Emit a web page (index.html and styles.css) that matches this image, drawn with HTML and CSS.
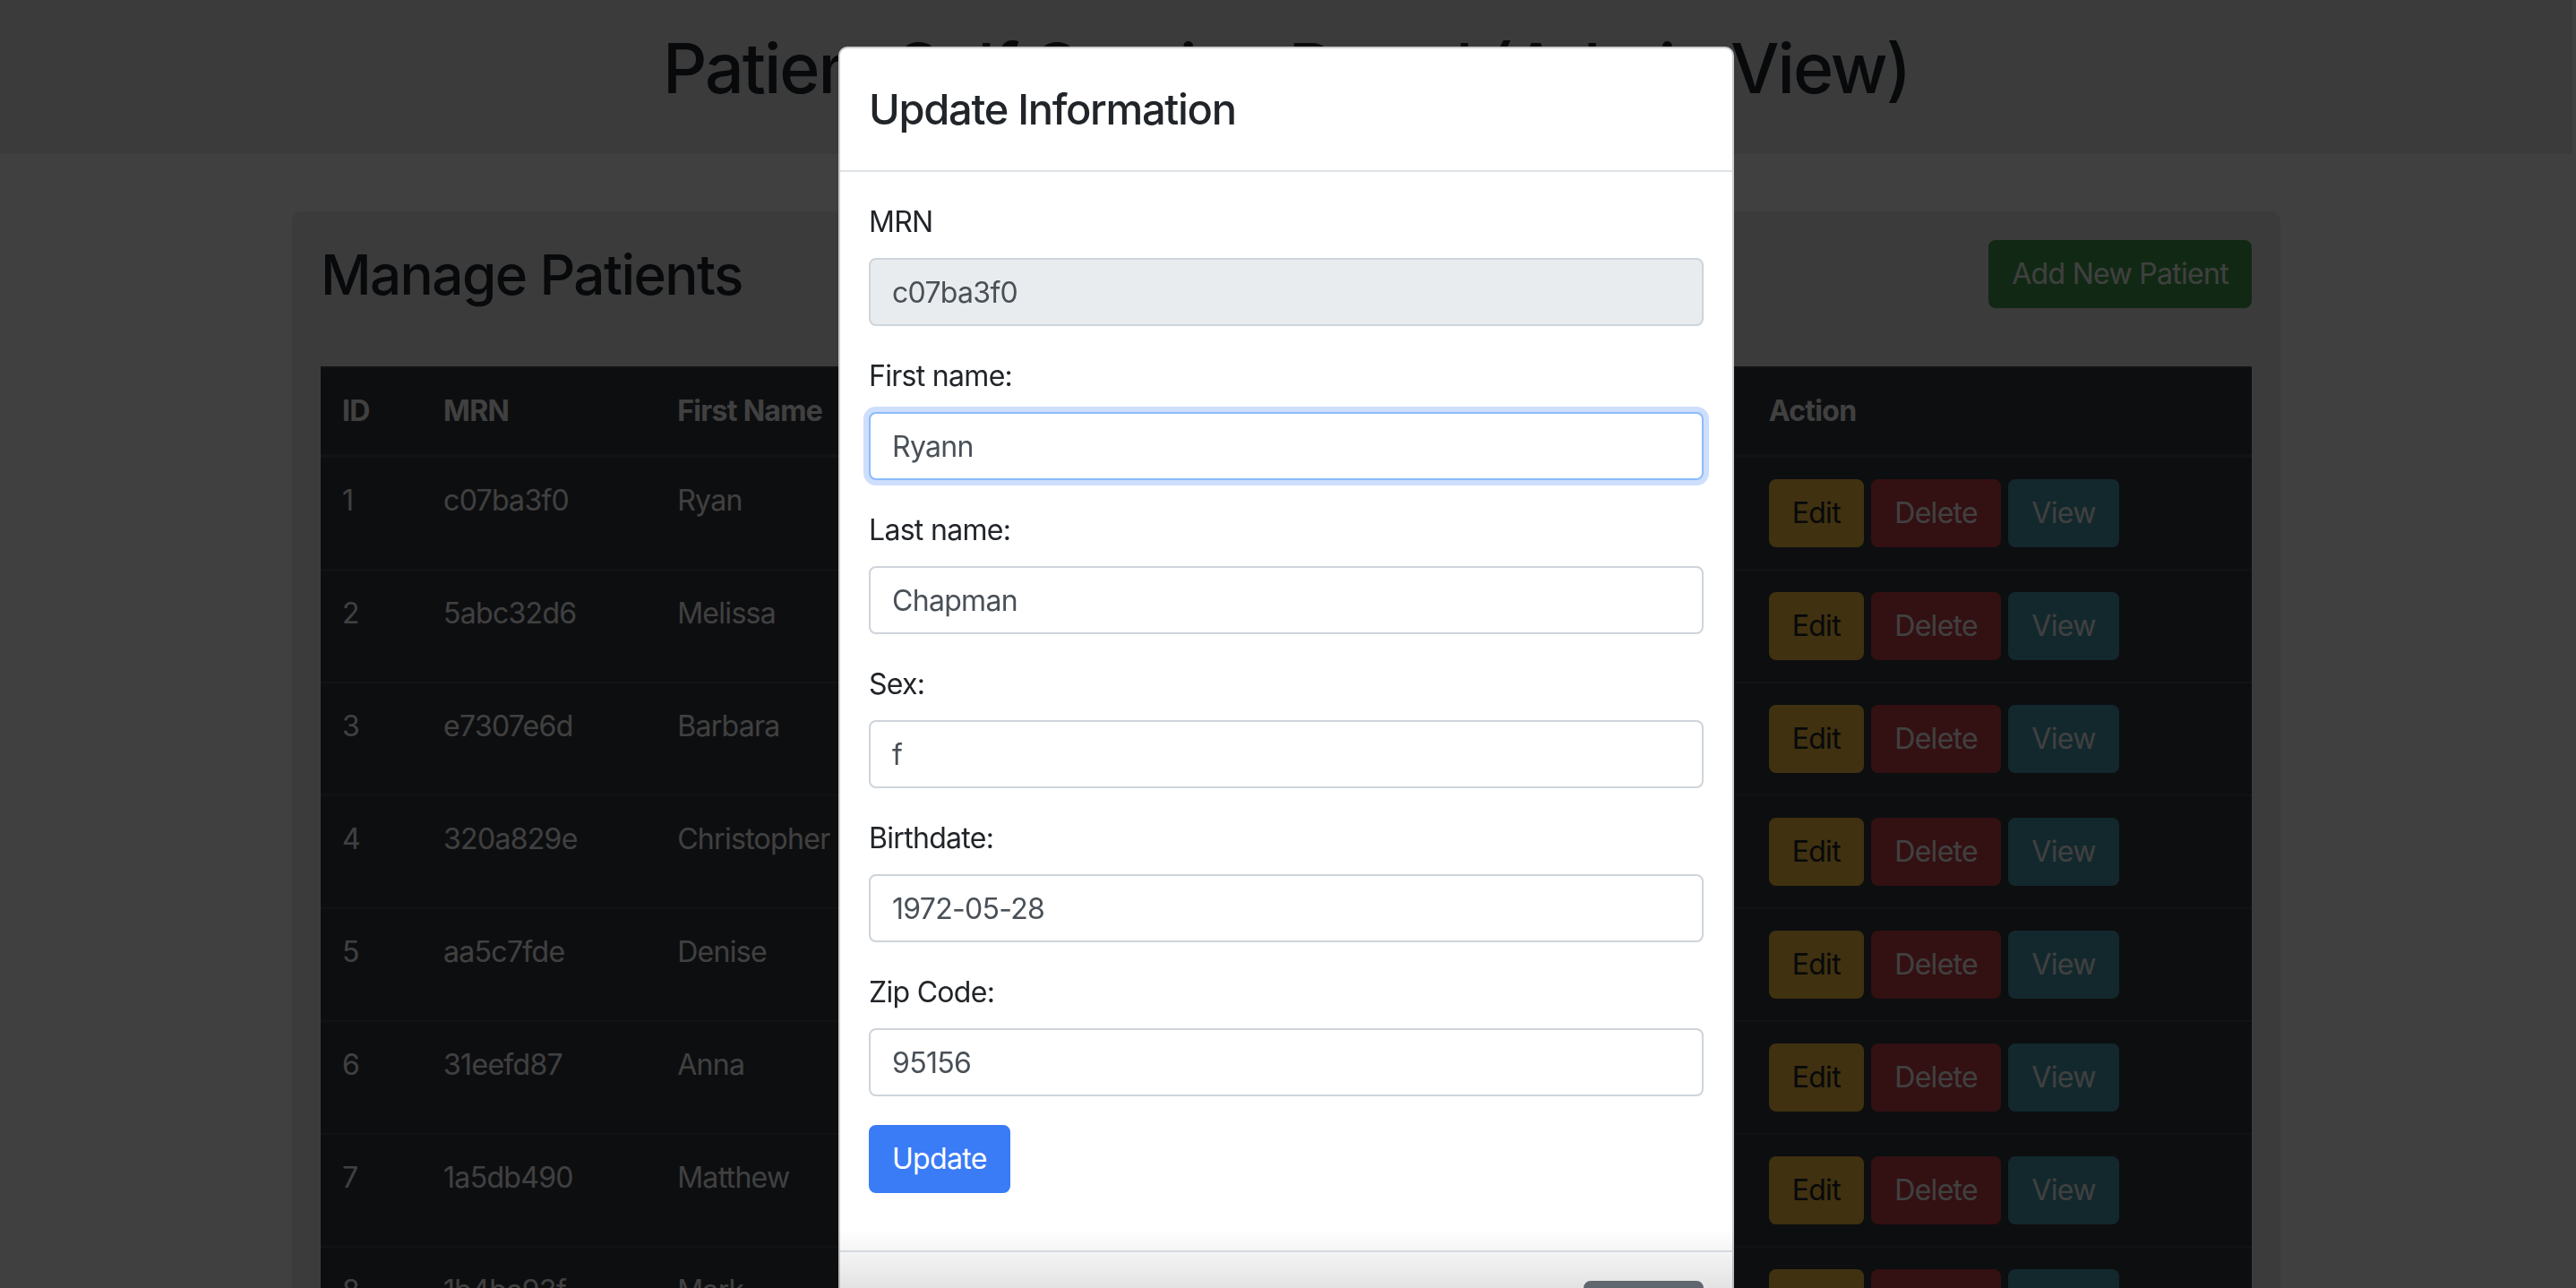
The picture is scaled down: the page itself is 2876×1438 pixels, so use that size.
FILE: index.html
```html
<!DOCTYPE html>
<html lang="en">
<head>
<meta charset="utf-8">
<title>Patient Self Service Portal (Admin View)</title>
<link rel="stylesheet" href="styles.css">
</head>
<body>
<header class="page-header">
  <h1 class="page-title">Patient Self Service Portal (Admin View)</h1>
</header>
<main class="container">
  <section class="panel">
    <div class="panel-head">
      <h2 class="panel-title">Manage Patients</h2>
      <button class="btn btn-success">Add New Patient</button>
    </div>
    <table class="table">
      <colgroup>
        <col class="c-id"><col class="c-mrn"><col class="c-first"><col class="c-last"><col class="c-sex"><col class="c-birth"><col class="c-zip"><col class="c-action">
      </colgroup>
      <thead>
        <tr><th>ID</th><th>MRN</th><th>First Name</th><th>Last Name</th><th>Sex</th><th>Birthdate</th><th>Zip Code</th><th>Action</th></tr>
      </thead>
      <tbody>
        <tr><td>1</td><td>c07ba3f0</td><td>Ryan</td><td>Chapman</td><td>f</td><td>1972-05-28</td><td>95156</td><td><button class="btn btn-warning">Edit</button> <button class="btn btn-danger">Delete</button> <button class="btn btn-info">View</button></td></tr>
        <tr><td>2</td><td>5abc32d6</td><td>Melissa</td><td>Moore</td><td>f</td><td>1985-11-02</td><td>94110</td><td><button class="btn btn-warning">Edit</button> <button class="btn btn-danger">Delete</button> <button class="btn btn-info">View</button></td></tr>
        <tr><td>3</td><td>e7307e6d</td><td>Barbara</td><td>Reed</td><td>f</td><td>1960-03-14</td><td>95014</td><td><button class="btn btn-warning">Edit</button> <button class="btn btn-danger">Delete</button> <button class="btn btn-info">View</button></td></tr>
        <tr><td>4</td><td>320a829e</td><td>Christopher</td><td>Lopez</td><td>m</td><td>1991-07-21</td><td>94301</td><td><button class="btn btn-warning">Edit</button> <button class="btn btn-danger">Delete</button> <button class="btn btn-info">View</button></td></tr>
        <tr><td>5</td><td>aa5c7fde</td><td>Denise</td><td>Baker</td><td>f</td><td>1978-09-09</td><td>95035</td><td><button class="btn btn-warning">Edit</button> <button class="btn btn-danger">Delete</button> <button class="btn btn-info">View</button></td></tr>
        <tr><td>6</td><td>31eefd87</td><td>Anna</td><td>Nguyen</td><td>f</td><td>1999-01-30</td><td>94086</td><td><button class="btn btn-warning">Edit</button> <button class="btn btn-danger">Delete</button> <button class="btn btn-info">View</button></td></tr>
        <tr><td>7</td><td>1a5db490</td><td>Matthew</td><td>Hill</td><td>m</td><td>1969-12-05</td><td>95126</td><td><button class="btn btn-warning">Edit</button> <button class="btn btn-danger">Delete</button> <button class="btn btn-info">View</button></td></tr>
        <tr><td>8</td><td>1b4ba93f</td><td>Mark</td><td>Evans</td><td>m</td><td>1982-04-17</td><td>94043</td><td><button class="btn btn-warning">Edit</button> <button class="btn btn-danger">Delete</button> <button class="btn btn-info">View</button></td></tr>
      </tbody>
    </table>
  </section>
</main>

<div class="backdrop"></div>

<div class="modal">
  <div class="modal-dialog">
    <div class="modal-content">
      <div class="modal-header">
        <h4 class="modal-title">Update Information</h4>
      </div>
      <div class="modal-body">
        <form>
          <div class="form-group">
            <label class="form-label">MRN</label>
            <input class="form-control is-readonly" type="text" value="c07ba3f0" readonly>
          </div>
          <div class="form-group">
            <label class="form-label">First name:</label>
            <input class="form-control is-focused" type="text" value="Ryann">
          </div>
          <div class="form-group">
            <label class="form-label">Last name:</label>
            <input class="form-control" type="text" value="Chapman">
          </div>
          <div class="form-group">
            <label class="form-label">Sex:</label>
            <input class="form-control" type="text" value="f">
          </div>
          <div class="form-group">
            <label class="form-label">Birthdate:</label>
            <input class="form-control" type="text" value="1972-05-28">
          </div>
          <div class="form-group">
            <label class="form-label">Zip Code:</label>
            <input class="form-control" type="text" value="95156">
          </div>
          <div class="form-group">
            <button type="button" class="btn btn-primary">Update</button>
          </div>
        </form>
      </div>
      <div class="modal-footer">
        <button type="button" class="btn btn-secondary">Close</button>
      </div>
    </div>
  </div>
</div>

<div class="bottom-fade"></div>
</body>
</html>
```

FILE: styles.css
```css
html, body {
  margin: 0;
  padding: 0;
}

body {
  width: 2872px;
  height: 1438px;
  overflow: hidden;
  font-family: Inter, "Noto Sans", "Liberation Sans", sans-serif;
  font-size: 32px;
  line-height: 1.5;
  letter-spacing: -0.7px;
  color: #212529;
  background: #ffffff;
}

/* ---------- page header ---------- */
.page-header {
  background: #e9ecef;
  padding: 28px 0 48px;
  text-align: center;
}

.page-title {
  margin: 0;
  font-size: 77px;
  font-weight: 500;
  line-height: 96px;
  letter-spacing: -2px;
}

/* ---------- container / panel ---------- */
.container {
  box-sizing: border-box;
  width: 2280px;
  padding: 0 30px;
  margin: 64px auto 0;
}

.panel {
  background: #e9ecef;
  border-radius: 10px;
  padding: 32px;
}

.panel-head {
  display: flex;
  justify-content: space-between;
  align-items: flex-start;
  margin-bottom: 64px;
}

.panel-title {
  margin: 0;
  font-size: 62px;
  font-weight: 500;
  line-height: 77px;
  letter-spacing: -1.6px;
}

/* ---------- buttons ---------- */
.btn {
  display: inline-block;
  font-family: inherit;
  font-size: 32px;
  font-weight: 400;
  line-height: 48px;
  letter-spacing: -0.7px;
  padding: 12px 24px;
  border: 2px solid transparent;
  border-radius: 8px;
  color: #ffffff;
  cursor: pointer;
  vertical-align: middle;
}

.btn-success { background: #46a550; border-color: #46a550; }
.btn-warning { background: #fdc440; border-color: #fdc440; color: #212529; }
.btn-danger  { background: #cc4249; border-color: #cc4249; }
.btn-info    { background: #4a9fb5; border-color: #4a9fb5; }
.btn-primary { background: #3a7bf6; border-color: #3a7bf6; }
.btn-secondary { background: #6c737b; border-color: #6c737b; }

/* ---------- table ---------- */
.table {
  width: 100%;
  border-collapse: collapse;
  table-layout: fixed;
  background: #363a40;
  color: #ffffff;
}

.c-id { width: 113px; }
.c-mrn { width: 261px; }
.c-first { width: 290px; }
.c-last { width: 290px; }
.c-sex { width: 150px; }
.c-birth { width: 270px; }
.c-zip { width: 218px; }
.c-action { width: 563px; }

.table th,
.table td {
  padding: 24px;
  border-top: 2px solid #454d55;
  text-align: left;
  vertical-align: top;
  line-height: 48px;
  white-space: nowrap;
  overflow: hidden;
}

.table thead th {
  border-bottom: 4px solid #454d55;
  font-weight: 700;
}

/* ---------- backdrop ---------- */
.backdrop {
  position: fixed;
  inset: 0;
  background: rgba(0, 0, 0, 0.75);
  z-index: 10;
}

/* ---------- modal ---------- */
.modal {
  position: fixed;
  top: 0;
  left: 0;
  width: 2872px;
  height: 1438px;
  z-index: 20;
  overflow: hidden;
}

.modal-dialog {
  width: 1000px;
  margin: 52px auto 0;
}

.modal-content {
  background: #ffffff;
  border: 2px solid rgba(0, 0, 0, 0.2);
  border-radius: 10px;
}

.modal-header {
  padding: 32px;
  border-bottom: 2px solid #dee2e6;
}

.modal-title {
  margin: 0;
  font-size: 47px;
  font-weight: 500;
  line-height: 72px;
  letter-spacing: -1.3px;
}

.modal-body {
  padding: 32px;
}

.modal-body form {
  margin: 0;
}

.form-group {
  margin-bottom: 32px;
}

.form-label {
  display: inline-block;
  margin-bottom: 16px;
  line-height: 48px;
}

.form-control {
  display: block;
  box-sizing: border-box;
  width: 100%;
  height: 76px;
  padding: 12px 24px;
  font-family: inherit;
  font-size: 32px;
  line-height: 48px;
  letter-spacing: -0.7px;
  color: #495057;
  background: #ffffff;
  border: 2px solid #ced4da;
  border-radius: 8px;
  outline: none;
}

.form-control.is-readonly {
  background: #e9ecef;
}

.form-control.is-focused {
  border-color: #8bbcfa;
  box-shadow: 0 0 0 6px rgba(58, 123, 246, 0.25);
}

.modal-footer {
  display: flex;
  justify-content: flex-end;
  padding: 24px;
  border-top: 2px solid #dee2e6;
}

.modal-footer .btn {
  margin: 8px;
}

/* ---------- bottom fade of the window ---------- */
.bottom-fade {
  position: fixed;
  left: 936px;
  bottom: 0;
  width: 1000px;
  height: 66px;
  background: linear-gradient(to bottom, rgba(0, 0, 0, 0), rgba(0, 0, 0, 0.11));
  z-index: 30;
  pointer-events: none;
}
```
